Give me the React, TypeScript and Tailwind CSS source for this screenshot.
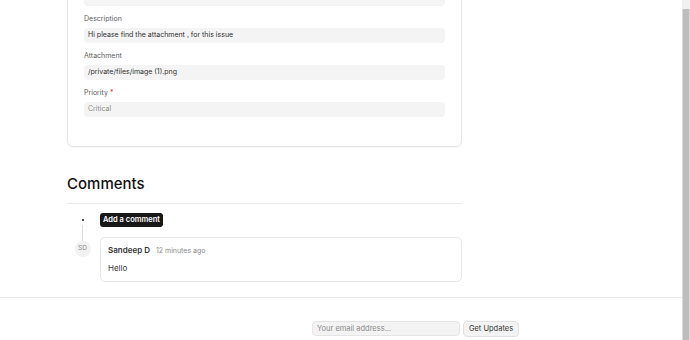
import React from 'react';

type Field = { label: string; value: string; required?: boolean; muted?: boolean };

const fields: Field[] = [
  { label: 'Team', value: 'ISSUE - Team' },
  { label: 'Description', value: 'Hi please find the attachment , for this issue' },
  { label: 'Attachment', value: '/private/files/image (1).png' },
  { label: 'Priority', value: 'Critical', required: true, muted: true },
];

const FieldRow: React.FC<{ field: Field }> = ({ field }) => (
  <div className="flex flex-col gap-[3px]">
    <label className="h-[12px] text-[7px] leading-[12px] text-[#5c5c5c]">
      {field.label}
      {field.required && <span className="text-[#e03636]"> *</span>}
    </label>
    <div
      className={`flex h-[15px] items-center rounded-[4px] bg-[#f4f4f4] px-[4px] text-[7px] ${
        field.muted ? 'text-[#8a8a8a]' : 'text-[#2f2f2f]'
      }`}
    >
      {field.value}
    </div>
  </div>
);

const App: React.FC = () => {
  return (
    <div className="flex h-[340px] w-[690px] overflow-hidden bg-white font-['Inter',sans-serif]">
      <div className="flex min-w-0 flex-1 flex-col">
        <div className="ml-[67px] w-[395px]">
          <div className="-mt-[41px] flex flex-col gap-[7px] rounded-[6px] border border-[#e6e6e6] px-[16px] pb-[29px] pt-[16px] shadow-[0_1px_2px_rgba(0,0,0,0.04)]">
            {fields.map(f => (
              <FieldRow key={f.label} field={f} />
            ))}
          </div>

          <h2 className="mt-[27px] text-[15px] font-medium leading-[20px] text-[#111]">Comments</h2>
          <div className="mt-[9px] h-px bg-[#e8e8e8]" />

          <div className="mt-[9px] flex">
            <div className="flex w-[31px] flex-col items-center">
              <div className="mt-[6px] h-[2px] w-[2px] rounded-full bg-[#222]" />
              <div className="mt-[4px] h-[16px] w-px bg-[#dcdcdc]" />
              <div className="flex h-[16px] w-[16px] items-center justify-center rounded-full bg-[#f1f1f1] text-[6.5px] text-[#8a8a8a]">
                SD
              </div>
            </div>
            <div className="ml-[2px] flex flex-1 flex-col">
              <button className="h-[14px] self-start whitespace-nowrap rounded-[3px] bg-[#171717] px-[3px] text-[7.5px] font-semibold leading-[14px] text-white">
                Add a comment
              </button>
              <div className="mt-[10px] flex h-[45px] flex-col rounded-[5px] border border-[#e8e8e8] px-[7px] pt-[6px]">
                <div className="flex items-baseline gap-[6px]">
                  <span className="text-[8px] font-semibold text-[#333]">Sandeep D</span>
                  <span className="text-[7px] text-[#8a8a8a]">12 minutes ago</span>
                </div>
                <p className="mt-[5px] text-[8px] text-[#3a3a3a]">Hello</p>
              </div>
            </div>
          </div>
        </div>

        <div className="mt-[15px] h-px bg-[#ececec]" />
        <div className="mt-[23px] flex gap-[3px] pl-[312px]">
          <input
            type="text"
            placeholder="Your email address..."
            className="h-[15px] w-[148px] rounded-[4px] border border-[#e5e5e5] bg-[#f3f3f3] px-[4px] text-[7.5px] text-[#333] outline-none placeholder:text-[#8a8a8a]"
          />
          <button className="h-[16px] w-[56px] rounded-[4px] border border-[#e2e2e2] bg-[#f3f3f3] text-[7.5px] text-[#333]">
            Get Updates
          </button>
        </div>
      </div>

      <div className="flex w-[8px] flex-col">
        <div className="h-[9px] bg-[#f1f1f1]" />
        <div className="flex-1 border-x border-[#d9d9d9] bg-[#bdbdbd]" />
      </div>
    </div>
  );
};

export default App;
